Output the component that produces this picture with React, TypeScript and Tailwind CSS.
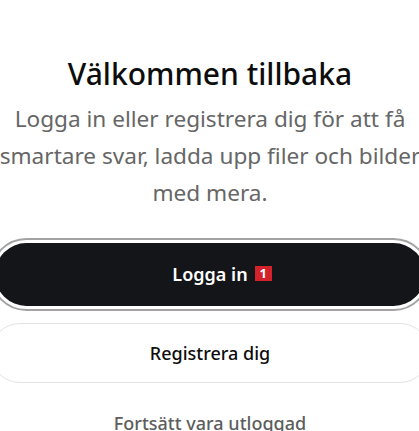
import React from "react";

export default function App() {
  return (
    <div
      className="relative w-[419px] h-[431px] overflow-hidden bg-white"
      style={{ fontFamily: '"Noto Sans", "Open Sans", sans-serif' }}
    >
      <div className="w-[440px] -ml-[10px] flex flex-col items-center pt-[52px]">
        <h1 className="text-[30px] leading-[44px] font-medium text-[#0d0d0d] text-center">
          Välkommen tillbaka
        </h1>
        <p className="mt-[4px] text-[22.6px] leading-[37px] text-[#666666] text-center">
          Logga in eller registrera dig för att få smartare svar, ladda upp filer och bilder med mera.
        </p>
        <div className="mt-[27px] w-full flex flex-col gap-[12px]">
          <div className="rounded-full border-[2px] border-[#a3a3a3] p-[3px]">
            <button className="w-full h-[63px] rounded-full bg-[#131519] text-white text-[18px] font-semibold flex items-center justify-center">
              <span className="relative">
                Logga in
                <span className="absolute left-[calc(100%+7px)] top-[5px] w-[17px] h-[15px] bg-[#d3222b] text-white text-[13px] leading-[15px] font-bold flex items-center justify-center">
                  1
                </span>
              </span>
            </button>
          </div>
          <button className="w-full h-[60px] rounded-full border border-[#e3e3e3] bg-white text-[18px] font-medium text-[#0d0d0d] flex items-center justify-center">
            Registrera dig
          </button>
          <button className="mt-[15px] text-[18px] leading-[27px] font-medium text-[#5d5d5d] self-center">
            Fortsätt vara utloggad
          </button>
        </div>
      </div>
    </div>
  );
}
